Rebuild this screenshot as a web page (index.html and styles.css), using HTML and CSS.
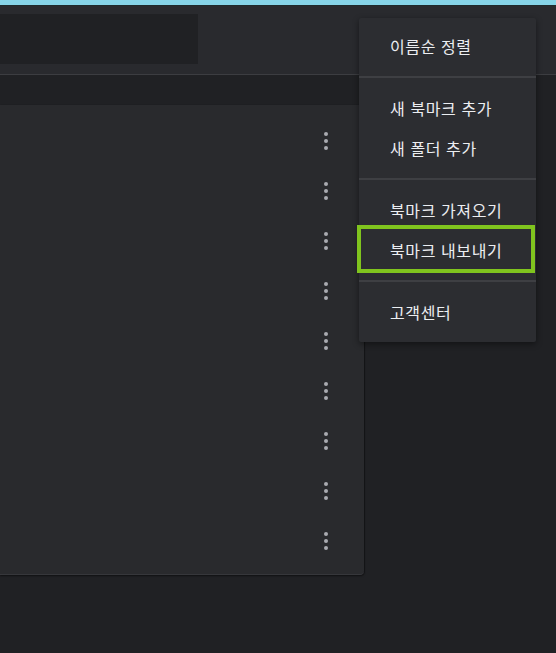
FILE: index.html
```html
<!DOCTYPE html>
<html lang="ko">
<head>
<meta charset="utf-8">
<link rel="stylesheet" href="styles.css">
</head>
<body>
<div class="topstrip"></div>
<header class="header">
  <div class="search"></div>
</header>
<div class="band"></div>
<main class="card">
  <div class="row"><span class="kebab"><i></i><i></i><i></i></span></div>
  <div class="row"><span class="kebab"><i></i><i></i><i></i></span></div>
  <div class="row"><span class="kebab"><i></i><i></i><i></i></span></div>
  <div class="row"><span class="kebab"><i></i><i></i><i></i></span></div>
  <div class="row"><span class="kebab"><i></i><i></i><i></i></span></div>
  <div class="row"><span class="kebab"><i></i><i></i><i></i></span></div>
  <div class="row"><span class="kebab"><i></i><i></i><i></i></span></div>
  <div class="row"><span class="kebab"><i></i><i></i><i></i></span></div>
  <div class="row"><span class="kebab"><i></i><i></i><i></i></span></div>
</main>
<nav class="menu">
  <div class="group first">
    <div class="item">이름순 정렬</div>
  </div>
  <div class="group">
    <div class="item">새 북마크 추가</div>
    <div class="item">새 폴더 추가</div>
  </div>
  <div class="group">
    <div class="item">북마크 가져오기</div>
    <div class="item highlight">북마크 내보내기</div>
  </div>
  <div class="group">
    <div class="item">고객센터</div>
  </div>
</nav>
</body>
</html>
```
FILE: styles.css
```css
* { box-sizing: border-box; }
html, body { margin: 0; padding: 0; }
body {
  background: #202124;
  width: 556px;
  height: 653px;
  overflow: hidden;
  position: relative;
  font-family: "Noto Sans CJK KR", "Noto Sans", sans-serif;
}
.topstrip {
  height: 6px;
  background: #87d4e8;
  border-bottom: 1px solid #1f2a2c;
}
.header {
  height: 69px;
  background: #292a2e;
  padding-top: 8px;
  border-bottom: 1px solid #3c3d41;
}
.search {
  width: 198px;
  height: 50px;
  background: #202124;
}
.band {
  height: 30px;
  background: #202124;
}
.card {
  width: 364px;
  height: 470px;
  background: #292a2d;
  border-radius: 0 0 4px 0;
  box-shadow: 0 1px 2px rgba(0,0,0,0.5), 1px 0 1px rgba(0,0,0,0.3);
  border-bottom: 1px solid #36373b;
  padding: 10px 0;
}
.row {
  height: 50px;
  display: flex;
  align-items: center;
  justify-content: flex-end;
  padding-right: 36px;
}
.kebab {
  display: flex;
  flex-direction: column;
  gap: 3px;
  align-items: center;
  margin-top: 2px;
}
.kebab i {
  display: block;
  width: 4px;
  height: 4px;
  border-radius: 50%;
  background: #a9abb0;
}
.menu {
  position: absolute;
  left: 359px;
  top: 18px;
  width: 177px;
  background: #2c2d31;
  border-radius: 2px;
  box-shadow: 0 2px 6px rgba(0,0,0,0.45);
  color: #eceef1;
  font-size: 16px;
  letter-spacing: 0.6px;
}
.group {
  padding: 10px 0;
  border-bottom: 2px solid #3e3f43;
}
.group.first { padding-top: 8px; }
.group:last-child { border-bottom: none; }
.item {
  height: 40px;
  line-height: 40px;
  padding-left: 31px;
  position: relative;
  white-space: nowrap;
}
.item.highlight::after {
  content: "";
  position: absolute;
  left: -2px;
  right: 1px;
  top: -5px;
  bottom: -3px;
  border: 4px solid #80c41e;
}
```
